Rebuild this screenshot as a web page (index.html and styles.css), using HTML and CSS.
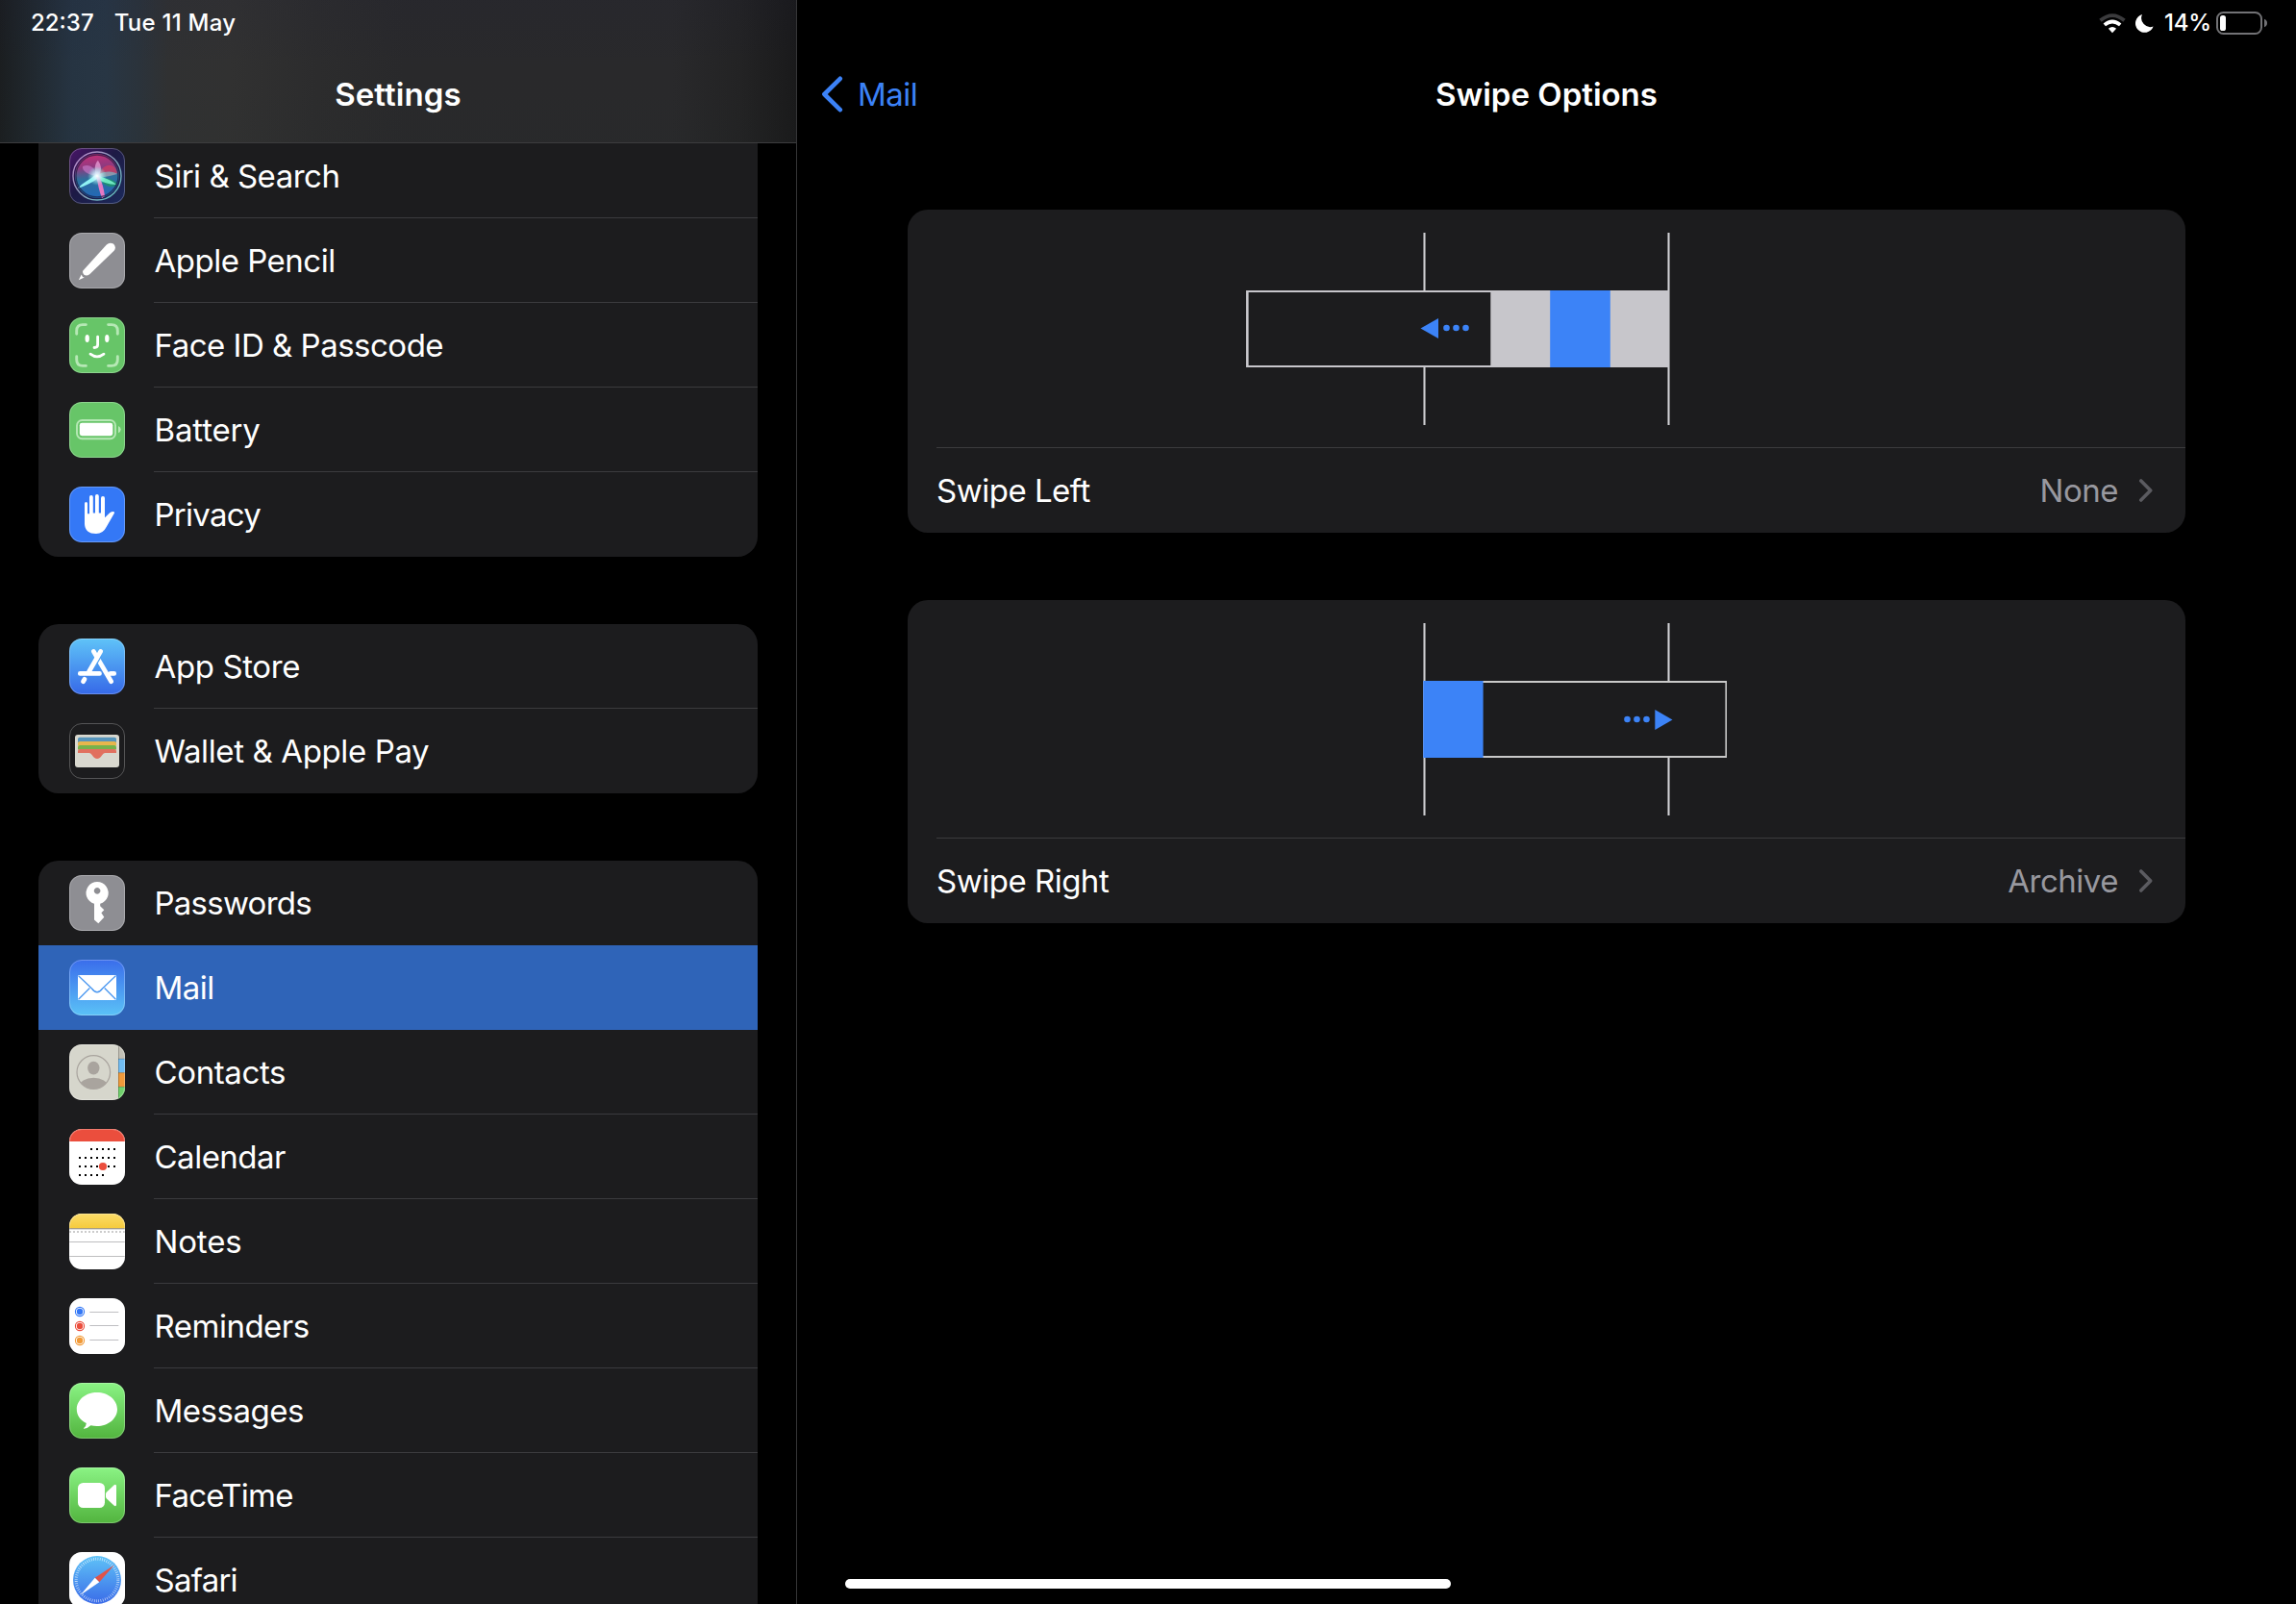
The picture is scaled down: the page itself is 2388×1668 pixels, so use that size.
FILE: index.html
```
<!DOCTYPE html>
<html lang="en">
<head>
<meta charset="utf-8">
<title>Settings</title>
<link rel="stylesheet" href="styles.css">
</head>
<body>
<div class="screen">
  <aside class="sidebar">
    <header class="sidebar-header">
      <div class="status status-left"><span class="clock">22:37</span><span class="date">Tue 11 May</span></div>
      <h1 class="title">Settings</h1>
    </header>
    <nav class="list">
      <ul class="group group-cut">
        <li class="row">
          <svg class="icon" viewBox="0 0 58 58">
            <defs>
              <linearGradient id="siriBg" x1="0" y1="0" x2="1" y2="1"><stop offset="0" stop-color="#4a1568"/><stop offset=".45" stop-color="#1d1a45"/><stop offset="1" stop-color="#1b2a5c"/></linearGradient>
              <linearGradient id="siriOrb" x1=".4" y1="0" x2=".5" y2="1"><stop offset="0" stop-color="#c72f78"/><stop offset=".3" stop-color="#8c3a80"/><stop offset=".55" stop-color="#2d6f9c"/><stop offset="1" stop-color="#2367b8"/></linearGradient>
              <linearGradient id="siriRing" x1="0" y1="0" x2="1" y2="1"><stop offset="0" stop-color="#c58ad0"/><stop offset=".5" stop-color="#8a9ab8"/><stop offset="1" stop-color="#58c6c0"/></linearGradient>
              <radialGradient id="siriGlow"><stop offset="0" stop-color="#fff"/><stop offset=".35" stop-color="#d6f6ff" stop-opacity=".8"/><stop offset="1" stop-color="#7fe" stop-opacity="0"/></radialGradient>
            </defs>
            <rect width="58" height="58" fill="url(#siriBg)"/>
            <circle cx="29" cy="29" r="23" fill="url(#siriOrb)"/>
            <path d="M29 29C36 15 47 14 50 26 44 29 36 30 29 29Z" fill="#d43a62" opacity=".75"/>
            <path d="M29 29C20 28 13 24 14 19 21 16 27 20 29 29Z" fill="#c77bc9" opacity=".65"/>
            <path d="M29 29C36 32 46 31 50 37 45 44 35 39 29 29Z" fill="#1d8f70" opacity=".9"/>
            <path d="M28 29C25 20 28 14 30 13 34 19 34 24 30 29Z" fill="#e9a0d8" opacity=".75"/>
            <path d="M29 28C38 23 46 24 50 27 44 29 36 30 29 31Z" fill="#7fb9c4" opacity=".7"/>
            <path d="M28 27C22 33 13 36 9 42 17 39 24 36 30 31Z" fill="#8ff2f4"/>
            <path d="M29 28C36 31 44 33 49 38 41 38 33 35 28 31Z" fill="#6ee8c0"/>
            <path d="M28 29C30 37 31 45 34 52L37 50C36 42 34 35 31 29Z" fill="#e579c4"/>
            <circle cx="29" cy="29" r="10" fill="url(#siriGlow)"/>
            <circle cx="29" cy="29" r="22" fill="none" stroke="#171a3a" stroke-width="1.3" opacity=".65"/>
            <circle cx="29" cy="29" r="25" fill="none" stroke="url(#siriRing)" stroke-width="1.4"/>
          </svg>
          <span class="label">Siri &amp; Search</span>
        </li>
        <li class="row">
          <svg class="icon" viewBox="0 0 58 58"><rect width="58" height="58" fill="#8e8e93"/><path d="M14.3 39.6 38.8 12.6Q42 9.3 45.9 11.6 49.5 15 46.6 18.8L21.2 43.3Q18 45.4 15.4 43.8 13.4 41.6 14.3 39.6Z" fill="#fff"/><path d="M9.8 49.2 12.7 43.4Q13.3 46 15.8 46.4Z" fill="#fff"/></svg>
          <span class="label">Apple Pencil</span>
        </li>
        <li class="row">
          <svg class="icon" viewBox="0 0 58 58"><rect width="58" height="58" fill="#67c568"/><g fill="none" stroke-linecap="round"><path d="M7.7 17.2V14Q7.7 7.6 14 7.6H17.4M40.6 7.6H44Q50.3 7.6 50.3 14V17.2M50.3 40.8V44Q50.3 50.4 44 50.4H40.6M17.4 50.4H14Q7.7 50.4 7.7 44V40.8" stroke="#b6e8b5" stroke-width="2.9"/><path d="M29.6 20.2V28.5Q29.6 31.5 26 31.5M22 38.2Q29 43.6 36 38.2" stroke="#fff" stroke-width="2.8"/></g><ellipse cx="18.7" cy="22" rx="2.2" ry="3.9" fill="#fff"/><ellipse cx="39.3" cy="22" rx="2.2" ry="3.9" fill="#fff"/></svg>
          <span class="label">Face ID &amp; Passcode</span>
        </li>
        <li class="row">
          <svg class="icon" viewBox="0 0 58 58"><rect width="58" height="58" fill="#67c568"/><rect x="8" y="19" width="40" height="19.2" rx="5.4" fill="none" stroke="#b6e8b5" stroke-width="1.9"/><rect x="10.8" y="21.8" width="34.5" height="13.4" rx="2.4" fill="#fff"/><path d="M51 25Q53.7 26 53.7 28.6T51 32.2Z" fill="#b6e8b5"/></svg>
          <span class="label label-wide">Battery</span>
        </li>
        <li class="row">
          <svg class="icon" viewBox="0 0 58 58"><rect width="58" height="58" fill="#3478f6"/><path d="M16 39V17.6Q16 16 17.5 16T19 17.6V28.2H21V11Q21 9 22.9 9T24.8 11V27.4H27V10Q27 8 28.9 8T30.8 10V27.4H33V12Q33 10 35 10T37 12V32.2L42.2 27.3Q44.6 25.6 46.6 26.2 47.7 26.7 46.7 28L38.8 41.8Q35.3 49 28 49 16.5 49 16 39Z" fill="#fff"/></svg>
          <span class="label label-tight">Privacy</span>
        </li>
      </ul>
      <ul class="group">
        <li class="row">
          <svg class="icon" viewBox="0 0 58 58"><defs><linearGradient id="store" x1="0" y1="0" x2="0" y2="1"><stop offset="0" stop-color="#5fc3f8"/><stop offset="1" stop-color="#3669e8"/></linearGradient></defs><rect width="58" height="58" fill="url(#store)"/><g fill="none" stroke="#fff" stroke-width="4.8" stroke-linecap="round"><path d="M25.3 13.4 43.7 44.7M11.3 36.4H31.5M43 36.4H46.7"/><path d="M33.6 17.6 27.5 28.2" stroke="#4ea0f2" stroke-width="1.5" stroke-linecap="butt"/><path d="M32.7 13.4 20.5 34.5M16 42.2 14.5 44.7"/></g></svg>
          <span class="label label-loose">App Store</span>
        </li>
        <li class="row">
          <svg class="icon" viewBox="0 0 58 58"><rect width="58" height="58" fill="#1c1c1e"/><rect x="6" y="12" width="46" height="34" rx="3" fill="#d9d8cf"/><path d="M9 20V16.6Q9 14.7 11 14.7H47Q49 14.7 49 16.6V20Z" fill="#5795bb"/><path d="M9 23.6V21Q9 19 11 19H47Q49 19 49 21V23.6Z" fill="#e7b64c"/><path d="M9 27.6V25Q9 23 11 23H47Q49 23 49 25V27.6Z" fill="#76b24b"/><path d="M9 31V29Q9 27.1 11 27.1H47Q49 27.1 49 29V31H37Q35.5 31 34 33.6 32 37 29 37T24 33.6Q22.5 31 21 31Z" fill="#e1705f"/></svg>
          <span class="label label-loose">Wallet &amp; Apple Pay</span>
        </li>
      </ul>
      <ul class="group">
        <li class="row row-plain">
          <svg class="icon" viewBox="0 0 58 58"><rect width="58" height="58" fill="#8e8e93"/><path fill-rule="evenodd" d="M26 29.8A11.6 11.6 0 1 1 32.2 29.8V32.2L36.3 36.2 33.4 39.3 36.3 43.8 30.3 50.2 26 46.4ZM29.1 13.1a3.3 3.3 0 1 0 .01 0Z" fill="#fff"/></svg>
          <span class="label label-tight">Passwords</span>
        </li>
        <li class="row row-selected">
          <svg class="icon" viewBox="0 0 58 58"><defs><linearGradient id="mail" x1="0" y1="0" x2="0" y2="1"><stop offset="0" stop-color="#3a6deb"/><stop offset="1" stop-color="#5bc2f7"/></linearGradient></defs><rect width="58" height="58" fill="url(#mail)"/><rect x="9" y="16" width="40" height="26" rx="1.2" fill="#fff"/><path d="M9.6 16.7 23.5 30Q29 37.5 34.5 30L48.4 16.7M9.6 41.3 21.3 29.5M48.4 41.3 36.7 29.5" fill="none" stroke="#4a97f0" stroke-width="1.3"/></svg>
          <span class="label">Mail</span>
        </li>
        <li class="row">
          <svg class="icon" viewBox="0 0 58 58"><defs><clipPath id="face"><circle cx="25.3" cy="29" r="17.3"/></clipPath></defs><rect width="58" height="58" fill="#d6d6cc"/><rect x="51" width="7" height="15" fill="#c3c1b7"/><rect x="51" y="15" width="7" height="14.5" fill="#72bdf2"/><rect x="51" y="29.5" width="7" height="14.7" fill="#f09a3b"/><rect x="51" y="44.2" width="7" height="14" fill="#70d16c"/><path d="M51.5 0V58M51 15.2H58M51 29.6H58M51 44.3H58" stroke="#000" stroke-opacity=".22"/><circle cx="25.3" cy="29" r="17.3" fill="none" stroke="#a9a49e" stroke-width="1.2"/><ellipse cx="25.3" cy="24.6" rx="6.2" ry="6.8" fill="#a9a49e"/><ellipse cx="25.3" cy="44" rx="15" ry="9.2" fill="#a9a49e" clip-path="url(#face)"/></svg>
          <span class="label label-loose">Contacts</span>
        </li>
        <li class="row">
          <svg class="icon" viewBox="0 0 58 58"><rect width="58" height="58" fill="#fff"/><rect width="58" height="13" fill="#eb4e3d"/><path d="M22 21H49M10 30H49M10 39H49M10 48H37" stroke="#000" stroke-width="2" stroke-dasharray="2 4"/><circle cx="35" cy="39" r="4.1" fill="#eb4e3d"/></svg>
          <span class="label">Calendar</span>
        </li>
        <li class="row">
          <svg class="icon" viewBox="0 0 58 58"><defs><linearGradient id="notes" x1="0" y1="0" x2="0" y2="1"><stop offset="0" stop-color="#fbdc69"/><stop offset="1" stop-color="#f6cb3d"/></linearGradient></defs><rect width="58" height="58" fill="#fff"/><rect width="58" height="15" fill="url(#notes)"/><path d="M0 15.5H58" stroke="#a99f83" stroke-width="1.2"/><path d="M0 16.5H58" stroke="#ddd"/><path d="M0 19H58" stroke="#ccc" stroke-width="2" stroke-dasharray="2 2"/><path d="M0 29.5H58M0 44.5H58" stroke="#bebec0"/></svg>
          <span class="label label-wide">Notes</span>
        </li>
        <li class="row">
          <svg class="icon" viewBox="0 0 58 58"><rect width="58" height="58" fill="#fff"/><g stroke-width="1.1" fill="none"><circle cx="11" cy="14" r="4.6" stroke="#3478f6"/><circle cx="11" cy="29" r="4.6" stroke="#eb4e3d"/><circle cx="11" cy="44" r="4.6" stroke="#f19a38"/></g><circle cx="11" cy="14" r="3.2" fill="#3478f6"/><circle cx="11" cy="29" r="3.2" fill="#eb4e3d"/><circle cx="11" cy="44" r="3.2" fill="#f19a38"/><path d="M21.3 14.5H51.3M21.3 28.5H51.3M21.3 43.5H51.3" stroke="#bfbfc2"/></svg>
          <span class="label">Reminders</span>
        </li>
        <li class="row">
          <svg class="icon" viewBox="0 0 58 58"><defs><linearGradient id="green" x1="0" y1="0" x2="0" y2="1"><stop offset="0" stop-color="#8af384"/><stop offset="1" stop-color="#52b43e"/></linearGradient></defs><rect width="58" height="58" fill="url(#green)"/><path d="M28.9 10C40.5 10 50 17.8 50 27.5S40.5 45 28.9 45Q25.5 45 22.4 44.2 19 47.5 15.2 47.8 14.5 47.6 15.2 47 17.8 44.8 17.8 42.1C11.5 39 7.8 33.6 7.8 27.5 7.8 17.8 17.2 10 28.9 10Z" fill="#fff"/></svg>
          <span class="label">Messages</span>
        </li>
        <li class="row">
          <svg class="icon" viewBox="0 0 58 58"><rect width="58" height="58" fill="url(#green)"/><rect x="9" y="16" width="28" height="26" rx="5.5" fill="#fff"/><path d="M38 27.5Q38 26.5 39 25.5L46.5 18.4Q49 16.8 49 19.5V38.5Q49 41.2 46.5 39.6L39 32.5Q38 31.5 38 30.5Z" fill="#fff"/></svg>
          <span class="label label-tight">FaceTime</span>
        </li>
        <li class="row">
          <svg class="icon" viewBox="0 0 58 58"><defs><linearGradient id="safari" x1="0" y1="0" x2="0" y2="1"><stop offset="0" stop-color="#5fc3f7"/><stop offset="1" stop-color="#3a6be8"/></linearGradient></defs><rect width="58" height="58" fill="#fff"/><circle cx="29" cy="29" r="25" fill="url(#safari)"/><circle cx="29" cy="29" r="21.8" fill="none" stroke="#fff" stroke-width="3" stroke-dasharray=".6 1.683" stroke-opacity=".85"/><path d="M46.8 13.5 31.3 31.3 26.7 26.7Z" fill="#e0534a"/><path d="M11.6 44.8 26.7 26.7 31.3 31.3Z" fill="#fff"/></svg>
          <span class="label label-tight">Safari</span>
        </li>
      </ul>
    </nav>
  </aside>
  <main class="detail">
    <header class="detail-header">
      <div class="status status-right">
        <svg class="wifi" width="28" height="21" viewBox="0 0 28 21"><g fill="none" stroke-width="3.8"><path d="M1.5 7.3Q14-3.1 26.5 7.3" stroke="#3b3b3d"/><path d="M5.8 11.9Q14 5.1 22.2 11.9" stroke="#fff"/></g><path d="M9.9 15.7Q14 12.4 18.1 15.7L14 20.2Z" fill="#fff"/></svg>
        <svg class="moon" width="19" height="19" viewBox="0 0 19 19"><path d="M7 0A9.6 9.6 0 1 0 18.6 12.5 9.3 9.3 0 0 1 7 0Z" fill="#fff"/></svg>
        <span class="percent">14%</span>
        <svg class="battery" width="54" height="24" viewBox="0 0 54 24"><rect x="1" y="1" width="46" height="22" rx="6.5" fill="none" stroke="#727275" stroke-width="2"/><rect x="4" y="4" width="6" height="16" rx="2.6" fill="#fff"/><path d="M50 7.8Q53 9 53 12T50 16.2Z" fill="#727275"/></svg>
      </div>
      <div class="bar">
        <a class="back"><svg width="24" height="38" viewBox="0 0 24 38"><path d="M19.8 2.8 3.4 19 19.8 35.2" fill="none" stroke="#3c82f7" stroke-width="4.6" stroke-linecap="round" stroke-linejoin="round"/></svg><span class="back-text">Mail</span></a>
        <h2 class="title">Swipe Options</h2>
      </div>
    </header>
    <section class="cards">
      <article class="card">
        <svg class="demo" width="1329" height="247" viewBox="0 0 1329 247">
          <path d="M537.5 24V224M791.5 24V224" stroke="#7c7c7f" stroke-width="3"/><path d="M537.5 24V224M791.5 24V224" stroke="#d0d0d4"/>
          <rect x="352" y="84" width="440" height="80" fill="#c7c6cb"/><rect x="354.6" y="86" width="251.7" height="76" fill="#1c1c1e"/>
          <rect x="668.2" y="84" width="62.6" height="80" fill="#3c83f7"/>
          <path d="M533.5 123.5 552 113V134Z" fill="#3c83f7"/><g fill="#3c83f7"><circle cx="560.5" cy="123" r="3.3"/><circle cx="570.5" cy="123" r="3.3"/><circle cx="580.5" cy="123" r="3.3"/></g>
        </svg>
        <div class="option"><span class="option-name">Swipe Left</span><span class="value">None</span><svg class="chevron" width="16" height="26" viewBox="0 0 16 26"><path d="M2.8 3 12.7 13 2.8 23" fill="none" stroke="#5b5b60" stroke-width="3.6" stroke-linecap="round" stroke-linejoin="round"/></svg></div>
      </article>
      <article class="card">
        <svg class="demo" width="1329" height="247" viewBox="0 0 1329 247">
          <path d="M537.5 24V224M791.5 24V224" stroke="#7c7c7f" stroke-width="3"/><path d="M537.5 24V224M791.5 24V224" stroke="#d0d0d4"/>
          <rect x="536" y="84" width="316" height="80" fill="#c9c9c9"/><rect x="598" y="86" width="252.4" height="76" fill="#1c1c1e"/>
          <rect x="536.2" y="84" width="62.4" height="80" fill="#3c83f7"/>
          <path d="M795.5 124.5 777.3 114V135Z" fill="#3c83f7"/><g fill="#3c83f7"><circle cx="748.5" cy="124" r="3.3"/><circle cx="758.5" cy="124" r="3.3"/><circle cx="768.5" cy="124" r="3.3"/></g>
        </svg>
        <div class="option"><span class="option-name">Swipe Right</span><span class="value">Archive</span><svg class="chevron" width="16" height="26" viewBox="0 0 16 26"><path d="M2.8 3 12.7 13 2.8 23" fill="none" stroke="#5b5b60" stroke-width="3.6" stroke-linecap="round" stroke-linejoin="round"/></svg></div>
      </article>
    </section>
    <div class="home-indicator"></div>
  </main>
</div>
</body>
</html>
```
FILE: styles.css
```
* { box-sizing: border-box; }

body {
  margin: 0;
  background: #000;
  color: #fff;
  font-family: Inter, "Liberation Sans", sans-serif;
  font-size: 33px;
  line-height: 40px;
}

.screen {
  display: flex;
  width: 2388px;
  height: 1668px;
  overflow: hidden;
}

/* Sidebar */
.sidebar {
  display: flex;
  flex-direction: column;
  width: 829px;
  height: 100%;
  border-right: 1px solid #353537;
  overflow: hidden;
}

.sidebar-header {
  flex: none;
  height: 149px;
  border-bottom: 1px solid #3c3c3e;
  background:
    linear-gradient(180deg, rgba(20, 20, 70, .06), transparent 50%, rgba(30, 50, 40, .03)),
    linear-gradient(90deg, #1b1e20 0, #20272d 30px, #263442 75px, #283644 110px, #2b333b 145px, #303132 175px, #313131 240px, #2c2c2d 330px, #29292b 420px, #29292b 700px, #232324 770px, #1a1a1b 828px);
}

.title {
  margin: 0;
  font-size: 33px;
  line-height: 40px;
  font-weight: 600;
  text-align: center;
}

.sidebar-header .title {
  margin-top: 30px;
  letter-spacing: .1px;
}

.status {
  display: flex;
  height: 48px;
  align-items: center;
  font-size: 24px;
  font-weight: 500;
}

.status-left { padding-left: 32px; gap: 21px; }
.date { letter-spacing: .25px; }

.list {
  flex: 1;
  min-height: 0;
  display: flex;
  flex-direction: column;
  gap: 70px;
  padding: 0 40px;
  overflow: hidden;
}

.group {
  flex: none;
  margin: 0;
  padding: 0;
  list-style: none;
  background: #1c1c1e;
  border-radius: 21px;
  overflow: hidden;
}

/* The first group is scrolled partly under the header */
.group-cut {
  margin-top: -10px;
  border-radius: 0 0 21px 21px;
}

.row {
  display: flex;
  align-items: center;
  height: 88px;
  padding-left: 32px;
  gap: 30px;
}

.icon {
  flex: none;
  width: 58px;
  height: 58px;
  border-radius: 13px;
  outline: 1px solid rgba(255, 255, 255, .25);
  outline-offset: -1px;
  overflow: hidden;
}

.label {
  flex: 1;
  height: 88px;
  padding-left: .5px;
  line-height: 88px;
  letter-spacing: -.5px;
  border-bottom: 1px solid #3b3b3e;
}

.label-tight { letter-spacing: -.75px; }
.label-loose { letter-spacing: -.38px; }
.label-wide { letter-spacing: -.15px; }

.row:last-child .label,
.row-plain .label,
.row-selected .label { border-bottom-color: transparent; }

.row-selected { background: #2f64b8; }

/* Detail pane */
.detail {
  flex: 1;
  display: flex;
  flex-direction: column;
}

.detail-header { height: 218px; }

.status-right { padding-left: 1354px; }
.moon { margin-left: 10px; }
.percent { width: 54px; margin-left: 11px; letter-spacing: -.2px; }
.battery { flex: none; }

.bar {
  display: grid;
  grid-template-columns: 1fr auto 1fr;
  align-items: center;
  margin-top: 30px;
}

.back {
  display: flex;
  align-items: center;
  height: 40px;
  padding-left: 25px;
  gap: 14px;
  color: #3c82f7;
  letter-spacing: -.5px;
}

.cards {
  display: flex;
  flex-direction: column;
  gap: 70px;
  padding-left: 115px;
}

.card {
  width: 1329px;
  background: #1c1c1e;
  border-radius: 21px;
  overflow: hidden;
}

.demo { display: block; }

.option {
  display: flex;
  align-items: center;
  height: 89px;
  margin-left: 30px;
  padding-right: 33px;
  border-top: 1px solid #3b3b3e;
  letter-spacing: -.5px;
}

.value {
  margin-left: auto;
  color: #98989f;
}

.chevron { margin-left: 21px; }

.home-indicator {
  width: 630px;
  height: 10px;
  margin: auto 0 16px 50px;
  border-radius: 5px;
  background: #fff;
}
```
